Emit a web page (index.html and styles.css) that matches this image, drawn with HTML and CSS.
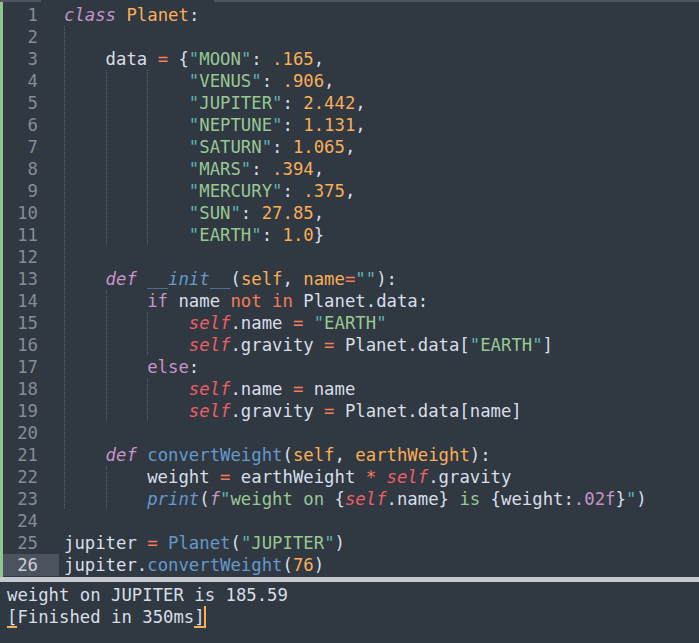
FILE: index.html
```html
<!DOCTYPE html>
<html lang="en">
<head>
<meta charset="utf-8">
<title>Planet.py</title>
<link rel="stylesheet" href="styles.css">
</head>
<body>
<div class="tabedge"><span class="seg"></span><span class="gap"></span><span class="seg grow"></span></div>
<div class="editor">
  <div class="gutter">
    <div>1</div><div>2</div><div>3</div><div>4</div><div>5</div><div>6</div><div>7</div><div>8</div><div>9</div><div>10</div><div>11</div><div>12</div><div>13</div><div>14</div><div>15</div><div>16</div><div>17</div><div>18</div><div>19</div><div>20</div><div>21</div><div>22</div><div>23</div><div>24</div><div>25</div><div class="cur">26</div>
  </div>
  <div class="code">
<div class="ln"><span class="kw it">class</span> <span class="cl">Planet</span>:</div>
<div class="ln"><span class="ig"></span></div>
<div class="ln"><span class="ig"></span>data <span class="op">=</span> {<span class="qt">"</span><span class="st">MOON</span><span class="qt">"</span>: <span class="nu">.165</span>,</div>
<div class="ln"><span class="ig"></span><span class="ig"></span><span class="ig"></span><span class="qt">"</span><span class="st">VENUS</span><span class="qt">"</span>: <span class="nu">.906</span>,</div>
<div class="ln"><span class="ig"></span><span class="ig"></span><span class="ig"></span><span class="qt">"</span><span class="st">JUPITER</span><span class="qt">"</span>: <span class="nu">2.442</span>,</div>
<div class="ln"><span class="ig"></span><span class="ig"></span><span class="ig"></span><span class="qt">"</span><span class="st">NEPTUNE</span><span class="qt">"</span>: <span class="nu">1.131</span>,</div>
<div class="ln"><span class="ig"></span><span class="ig"></span><span class="ig"></span><span class="qt">"</span><span class="st">SATURN</span><span class="qt">"</span>: <span class="nu">1.065</span>,</div>
<div class="ln"><span class="ig"></span><span class="ig"></span><span class="ig"></span><span class="qt">"</span><span class="st">MARS</span><span class="qt">"</span>: <span class="nu">.394</span>,</div>
<div class="ln"><span class="ig"></span><span class="ig"></span><span class="ig"></span><span class="qt">"</span><span class="st">MERCURY</span><span class="qt">"</span>: <span class="nu">.375</span>,</div>
<div class="ln"><span class="ig"></span><span class="ig"></span><span class="ig"></span><span class="qt">"</span><span class="st">SUN</span><span class="qt">"</span>: <span class="nu">27.85</span>,</div>
<div class="ln"><span class="ig"></span><span class="ig"></span><span class="ig"></span><span class="qt">"</span><span class="st">EARTH</span><span class="qt">"</span>: <span class="nu">1.0</span>}</div>
<div class="ln"><span class="ig"></span></div>
<div class="ln"><span class="ig"></span><span class="kw it">def</span> <span class="fn it">__init__</span>(<span class="pa">self</span>, <span class="pa">name</span><span class="op">=</span><span class="qt">""</span>):</div>
<div class="ln"><span class="ig"></span><span class="ig"></span><span class="kw">if</span> name <span class="op">not</span> <span class="op">in</span> Planet.data:</div>
<div class="ln"><span class="ig"></span><span class="ig"></span><span class="ig"></span><span class="sf">self</span>.name <span class="op">=</span> <span class="qt">"</span><span class="st">EARTH</span><span class="qt">"</span></div>
<div class="ln"><span class="ig"></span><span class="ig"></span><span class="ig"></span><span class="sf">self</span>.gravity <span class="op">=</span> Planet.data[<span class="qt">"</span><span class="st">EARTH</span><span class="qt">"</span>]</div>
<div class="ln"><span class="ig"></span><span class="ig"></span><span class="kw">else</span>:</div>
<div class="ln"><span class="ig"></span><span class="ig"></span><span class="ig"></span><span class="sf">self</span>.name <span class="op">=</span> name</div>
<div class="ln"><span class="ig"></span><span class="ig"></span><span class="ig"></span><span class="sf">self</span>.gravity <span class="op">=</span> Planet.data[name]</div>
<div class="ln"><span class="ig"></span></div>
<div class="ln"><span class="ig"></span><span class="kw it">def</span> <span class="fn">convertWeight</span>(<span class="pa">self</span>, <span class="pa">earthWeight</span>):</div>
<div class="ln"><span class="ig"></span><span class="ig"></span>weight <span class="op">=</span> earthWeight <span class="op">*</span> <span class="sf">self</span>.gravity</div>
<div class="ln"><span class="ig"></span><span class="ig"></span><span class="fn it">print</span>(<span class="kw it">f</span><span class="qt">"</span><span class="st">weight on </span>{<span class="sf">self</span>.name}<span class="st"> is </span>{weight:<span class="kw">.02f</span>}<span class="qt">"</span>)</div>
<div class="ln"></div>
<div class="ln">jupiter <span class="op">=</span> <span class="fn">Planet</span>(<span class="qt">"</span><span class="st">JUPITER</span><span class="qt">"</span>)</div>
<div class="ln">jupiter.<span class="fn">convertWeight</span>(<span class="nu">76</span>)</div>
  </div>
</div>
<div class="sep"></div>
<div class="output">
<div class="ln">weight on JUPITER is 185.59</div>
<div class="ln"><span class="bm">[</span>Finished in 350ms<span class="bm">]</span><span class="caret"></span></div>
</div>
</body>
</html>
```

FILE: styles.css
```css
html, body {
  margin: 0;
  padding: 0;
}

body {
  height: 643px;
  overflow: hidden;
  display: flex;
  flex-direction: column;
  background: #303841;
  color: #d8dee9;
  font-family: "DejaVu Sans Mono", "Liberation Mono", monospace;
  font-size: 17.3px;
}

.tabedge {
  height: 2px;
  display: flex;
  flex: none;
}

.tabedge .seg {
  width: 41px;
  background: #4d545c;
}

.tabedge .gap {
  width: 173px;
}

.tabedge .grow {
  flex: 1;
}

.editor {
  flex: 1;
  display: flex;
  min-height: 0;
}

.gutter {
  width: 56px;
  flex: none;
  border-left: 3px solid #92c58d;
  padding-top: 2px;
  text-align: right;
  color: #858c96;
}

.gutter div {
  height: 22px;
  line-height: 22px;
  padding-right: 21px;
}

.gutter .cur {
  background: #4a535e;
  color: #cdd2da;
}

.code {
  flex: 1;
  padding: 2px 0 0 5px;
}

.ln {
  height: 22px;
  line-height: 22px;
  white-space: pre;
}

.ig {
  display: inline-block;
  width: 4ch;
  height: 22px;
  vertical-align: top;
  background-image: repeating-linear-gradient(to bottom, #5e656e 0, #5e656e 1px, transparent 1px, transparent 2px);
  background-size: 1px 100%;
  background-repeat: no-repeat;
  background-position: left top;
}

.kw { color: #c695c6; }
.it { font-style: italic; }
.op { color: #f97b58; }
.nu { color: #f9ae58; }
.st { color: #99c794; }
.qt { color: #5fb4b4; }
.fn { color: #6699cc; }
.sf { color: #ec5f66; font-style: italic; }
.pa { color: #f9ae58; }
.cl { color: #f9ae58; }

.sep {
  height: 5px;
  flex: none;
  background: #c5c8cc;
}

.output {
  height: 61px;
  flex: none;
  box-sizing: border-box;
  padding: 2px 0 0 7px;
}

.bm {
  display: inline-block;
  height: 22px;
  vertical-align: top;
  box-shadow: inset 0 -2px 0 #f9ae58;
}

.caret {
  display: inline-block;
  width: 2px;
  height: 22px;
  margin-left: -1px;
  vertical-align: top;
  background: #f9ae58;
}
```
